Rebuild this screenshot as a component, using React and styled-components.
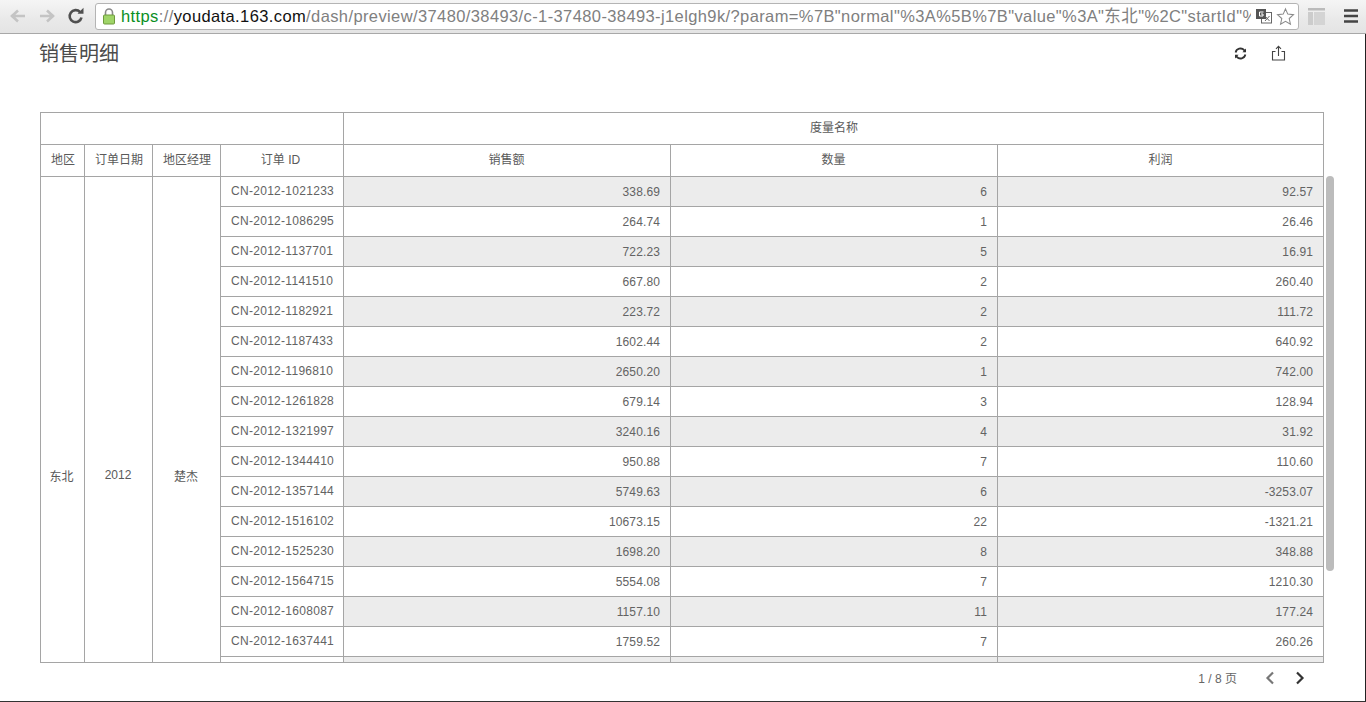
import React from "react";
import styled, { createGlobalStyle } from "styled-components";

const Global = createGlobalStyle`
  html, body { margin: 0; padding: 0; background: #fff; overflow: hidden; }
  body { font-family: "Liberation Sans", "Noto Sans CJK SC", sans-serif; }
`;

const Frame = styled.div`
  width: 1366px; height: 702px; box-sizing: border-box;
  border-bottom: 1px solid #333;
  display: flex; flex-direction: column; overflow: hidden; background: #fff;
`;
const Toolbar = styled.div`
  height: 34px; flex: none; box-sizing: border-box;
  display: flex; align-items: center; padding: 0 0 1px 0;
  background: linear-gradient(#f5f5f5, #e9e9e9 60%, #e4e4e4);
  border-bottom: 1px solid #a8a8a8;
`;
const NavButton = styled.button`
  width: 29px; height: 28px; flex: none; padding: 0; border: 0; background: none;
  display: flex; align-items: center; justify-content: center;
`;
const NavGroup = styled.div`display: flex; margin-left: 3px; width: 92px; flex: none;`;
const Omnibox = styled.div`
  width: 1204px; height: 27px; box-sizing: border-box; flex: none;
  background: #fff; border: 1px solid #b4b4b4; border-radius: 3px;
  display: flex; align-items: center; padding: 0 3px 0 6px; gap: 5px; overflow: hidden;
`;
const UrlText = styled.div`
  flex: 1; min-width: 0; white-space: nowrap; overflow: hidden;
  font-size: 16.5px; letter-spacing: 0.39px; color: #808080; line-height: 24px;
`;
const Scheme = styled.span`color: #0a8f1f;`;
const Host = styled.span`color: #111;`;
const ToolIcons = styled.div`display: flex; align-items: center; gap: 4px; flex: none; background: #fff;`;
const RightTools = styled.div`display: flex; align-items: center; margin-left: 9px; gap: 19px; flex: none;`;

const Page = styled.main`
  flex: 1; min-height: 0; display: flex; flex-direction: column; padding: 0 40px;
  border-right: 1px solid #222;
`;
const Header = styled.header`
  height: 78px; flex: none; display: flex; justify-content: space-between; align-items: flex-start;
`;
const Title = styled.h1`
  margin: 7px 0 0 -1px; font-size: 20px; font-weight: 400; line-height: 26px; color: #4c4c4c;
`;
const Actions = styled.div`display: flex; gap: 21px; margin: 11px 0 0 0; padding-right: 38px;`;
const IconButton = styled.span`width: 17px; height: 17px; display: block;`;

const TableArea = styled.div`position: relative; flex: none; width: 1284px;`;
const TableClip = styled.div`
  height: 551px; box-sizing: border-box; overflow: hidden; border-bottom: 1px solid #a5a5a5;
`;
const Table = styled.table`
  border-collapse: collapse; table-layout: fixed; width: 1284px;
  font-size: 12px; color: #636363;
`;
const Cell = styled.td`
  border: 1px solid #a5a5a5; padding: 0 12px 2px 10px; box-sizing: border-box;
  text-align: center;
  background: #fff;
  height: 30px;
  overflow: hidden; white-space: nowrap; vertical-align: middle; letter-spacing: 0.29px;
  font-weight: 400;
`;
const NumCell = styled(Cell)`
  padding: 0 10px 2px;
  text-align: right;
  letter-spacing: 0.12px;
  background: ${p => (p.$shade ? "#ececec" : "#fff")};
`;
const HeadCell = styled(Cell).attrs({ as: "th" })`
  height: 32px; padding: 0 ${p => p.$pr ?? 11}px 4px 10px; letter-spacing: 0; color: #5a5a5a;
`;
const SpanCell = styled(Cell)`
  padding: 0 ${p => p.$pr ?? 1}px 3px 0; letter-spacing: 0; color: #5a5a5a;
`;
const NumText = styled.span`position: relative; top: 1px;`;
const Thumb = styled.div`
  position: absolute; left: 1286px; top: 64px; width: 8px; height: 395px;
  background: #bcbcbc; border-radius: 4px;
`;
const Footer = styled.footer`
  flex: 1; display: flex; align-items: center; justify-content: flex-end;
  padding: 0 0 9px 0; font-size: 12px; color: #666; width: 1284px;
`;
const PageInfo = styled.span`margin-right: 26px;`;
const Pager = styled.div`display: flex; gap: 16px; margin-right: 17px; align-items: center;`;

const heads = [
  ["地区", 13], ["订单日期", 13], ["地区经理", 13], ["订单 ID", 13],
  ["销售额", 11], ["数量", 11], ["利润", 10],
];

const rows = [
  ["CN-2012-1021233","338.69","6","92.57"],
  ["CN-2012-1086295","264.74","1","26.46"],
  ["CN-2012-1137701","722.23","5","16.91"],
  ["CN-2012-1141510","667.80","2","260.40"],
  ["CN-2012-1182921","223.72","2","111.72"],
  ["CN-2012-1187433","1602.44","2","640.92"],
  ["CN-2012-1196810","2650.20","1","742.00"],
  ["CN-2012-1261828","679.14","3","128.94"],
  ["CN-2012-1321997","3240.16","4","31.92"],
  ["CN-2012-1344410","950.88","7","110.60"],
  ["CN-2012-1357144","5749.63","6","-3253.07"],
  ["CN-2012-1516102","10673.15","22","-1321.21"],
  ["CN-2012-1525230","1698.20","8","348.88"],
  ["CN-2012-1564715","5554.08","7","1210.30"],
  ["CN-2012-1608087","1157.10","11","177.24"],
  ["CN-2012-1637441","1759.52","7","260.26"],
  ["","","",""],
  ["","","",""],
  ["","","",""],
  ["","","",""],
];

const Arrow = ({ flip }) => (
  <svg width="20" height="20" viewBox="0 0 20 20" style={flip ? { transform: "scaleX(-1)" } : undefined}>
    <path d="M3 10h14M10 4.500L4 10l6 5.500" fill="none" stroke="#c4c4c4" strokeWidth="2.600" />
  </svg>
);

export default function App() {
  return (
    <Frame>
      <Global />
      <Toolbar>
        <NavGroup>
          <NavButton><Arrow /></NavButton>
          <NavButton><Arrow flip /></NavButton>
          <NavButton>
            <svg width="18" height="18" viewBox="0 0 18 18">
              <path d="M14.500 10.500A6 6 0 1 1 13 5" fill="none" stroke="#505050" strokeWidth="2.600" />
              <path d="M10.500 6.800h6V0.800z" fill="#505050" />
            </svg>
          </NavButton>
        </NavGroup>
        <Omnibox>
          <svg width="14" height="17" viewBox="0 0 14 17" style={{ flex: "none" }}>
            <path d="M3.500 7V4.500a3.500 3.500 0 0 1 7 0V7" fill="none" stroke="#8a8a8a" strokeWidth="1.600" />
            <rect x="1.500" y="7" width="11" height="9" rx="1" fill="#9fd468" stroke="#6f9a3d" />
          </svg>
          <UrlText>
            <Scheme>https</Scheme>://<Host>youdata.163.com</Host>/dash/preview/37480/38493/c-1-37480-38493-j1elgh9k/?param=%7B"normal"%3A%5B%7B"value"%3A"东北"%2C"startId"%3A
          </UrlText>
          <ToolIcons>
            <svg width="16" height="16" viewBox="0 0 16 16">
              <rect x="5.500" y="4.500" width="10" height="10.500" fill="#fff" stroke="#666" />
              <rect x="0" y="1" width="10" height="10" fill="#555" />
              <path d="M9 8l4.500 5M13.500 8L9 13" stroke="#666" fill="none" />
              <path d="M7.500 4H3.500v4h3.500V6H5" stroke="#fff" fill="none" />
            </svg>
            <svg width="19" height="19" viewBox="0 0 20 20">
              <path d="M10 2l2.400 5.500 6 .6-4.500 4 1.300 5.900L10 15l-5.200 3 1.300-5.900-4.500-4 6-.6z" fill="#fff" stroke="#8a8a8a" strokeWidth="1.100" />
            </svg>
          </ToolIcons>
        </Omnibox>
        <RightTools>
          <svg width="17" height="17" viewBox="0 0 17 17">
            <rect x="0" y="0" width="17" height="2.500" fill="#bbb" />
            <rect x="0" y="4" width="5" height="13" fill="#ccc" />
            <rect x="6" y="4" width="11" height="13" fill="#d4d4d4" />
          </svg>
          <svg width="14" height="14" viewBox="0 0 14 14">
            <path d="M0 1.500h14M0 7h14M0 12.500h14" stroke="#444" strokeWidth="2.400" />
          </svg>
        </RightTools>
      </Toolbar>
      <Page>
        <Header>
          <Title>销售明细</Title>
          <Actions>
            <IconButton>
              <svg width="17" height="17" viewBox="0 0 17 17">
                <path d="M3.600 7.500a5 5 0 0 1 8.600-2.300L13.500 6.500M13.400 9.500a5 5 0 0 1-8.600 2.300L3.500 10.500" fill="none" stroke="#333" strokeWidth="1.800" />
                <path d="M14 3.600v3.600h-3.600zM3 13.400V9.800h3.600z" fill="#333" />
              </svg>
            </IconButton>
            <IconButton>
              <svg width="17" height="17" viewBox="0 0 17 17">
                <path d="M5.500 6.500H2.500v8.500h12V6.500h-3M8.500 11V1.500M6 3.800l2.500-2.600L11 3.800" fill="none" stroke="#444" strokeWidth="1.100" />
              </svg>
            </IconButton>
          </Actions>
        </Header>
        <TableArea>
          <TableClip>
            <Table>
              <colgroup>
                <col style={{ width: 44 }} />
                <col style={{ width: 68 }} />
                <col style={{ width: 68 }} />
                <col style={{ width: 123 }} />
                <col style={{ width: 327 }} />
                <col style={{ width: 327 }} />
                <col style={{ width: 326 }} />
              </colgroup>
              <thead>
                <tr>
                  <HeadCell colSpan={4} />
                  <HeadCell colSpan={3} $pr={9}>度量名称</HeadCell>
                </tr>
                <tr>
                  {heads.map(([h, pr]) => (
                    <HeadCell key={h} $pr={pr}>{h}</HeadCell>
                  ))}
                </tr>
              </thead>
              <tbody>
                {rows.map((r, i) => (
                  <tr key={i}>
                    {i === 0 && <SpanCell rowSpan={20} $pr={2}>东北</SpanCell>}
                    {i === 0 && <SpanCell rowSpan={20}>2012</SpanCell>}
                    {i === 0 && <SpanCell rowSpan={20}>楚杰</SpanCell>}
                    <Cell>{r[0]}</Cell>
                    <NumCell $shade={i % 2 === 0}><NumText>{r[1]}</NumText></NumCell>
                    <NumCell $shade={i % 2 === 0}><NumText>{r[2]}</NumText></NumCell>
                    <NumCell $shade={i % 2 === 0}><NumText>{r[3]}</NumText></NumCell>
                  </tr>
                ))}
              </tbody>
            </Table>
          </TableClip>
          <Thumb />
        </TableArea>
        <Footer>
          <PageInfo>1 / 8 页</PageInfo>
          <Pager>
            <svg width="14" height="14" viewBox="0 0 14 14"><path d="M10 1.500L4.500 7l5.500 5.500" fill="none" stroke="#777" strokeWidth="2.200" /></svg>
            <svg width="14" height="14" viewBox="0 0 14 14"><path d="M4 1.500L9.500 7 4 12.500" fill="none" stroke="#333" strokeWidth="2.200" /></svg>
          </Pager>
        </Footer>
      </Page>
    </Frame>
  );
}
